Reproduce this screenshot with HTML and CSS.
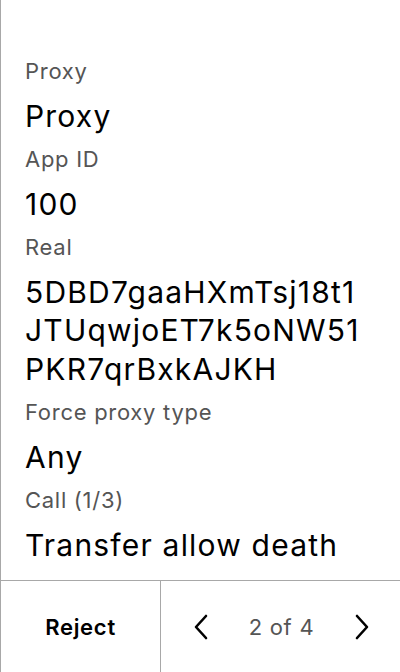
FILE: index.html
```html
<!DOCTYPE html>
<html>
<head>
<meta charset="utf-8">
<link rel="stylesheet" href="styles.css">
</head>
<body>
<div class="screen">
  <div class="content">
    <div class="field">
      <div class="label">Proxy</div>
      <div class="value">Proxy</div>
    </div>
    <div class="field">
      <div class="label">App ID</div>
      <div class="value">100</div>
    </div>
    <div class="field">
      <div class="label">Real</div>
      <div class="value">5DBD7gaaHXmTsj18t1JTUqwjoET7k5oNW51PKR7qrBxkAJKH</div>
    </div>
    <div class="field">
      <div class="label">Force proxy type</div>
      <div class="value">Any</div>
    </div>
    <div class="field">
      <div class="label">Call (1/3)</div>
      <div class="value">Transfer allow death</div>
    </div>
  </div>
  <div class="footer">
    <div class="reject">Reject</div>
    <div class="pager">
      <svg class="chev" width="20" height="28" viewBox="0 0 20 28"><path d="M15 3 L5 14 L15 25" fill="none" stroke="#000" stroke-width="2.6" stroke-linecap="round" stroke-linejoin="round"/></svg>
      <span class="count">2 of 4</span>
      <svg class="chev" width="20" height="28" viewBox="0 0 20 28"><path d="M5 3 L15 14 L5 25" fill="none" stroke="#000" stroke-width="2.6" stroke-linecap="round" stroke-linejoin="round"/></svg>
    </div>
  </div>
</div>
</body>
</html>
```
FILE: styles.css
```css
html, body {
  margin: 0;
  padding: 0;
  background: #fff;
}
body {
  font-family: Inter, "Noto Sans", sans-serif;
  letter-spacing: 0.045em;
}
.screen {
  width: 399px;
  height: 672px;
  border-left: 1px solid #a8a8a8;
  display: flex;
  flex-direction: column;
}
.content {
  flex: 1;
  padding: 57px 37px 0 24px;
  width: 338px;
  display: flex;
  flex-direction: column;
  gap: 10px;
}
.label {
  font-size: 22px;
  line-height: 28px;
  color: #555;
  margin-bottom: 11.5px;
}
.value {
  font-size: 30px;
  line-height: 38.5px;
  letter-spacing: 0.04em;
  color: #000;
  word-break: break-all;
}
.footer {
  height: 91px;
  border-top: 1px solid #a8a8a8;
  display: flex;
}
.reject {
  width: 159px;
  border-right: 1px solid #a8a8a8;
  display: flex;
  align-items: center;
  justify-content: center;
  font-size: 22px;
  font-weight: 600;
  color: #000;
}
.pager {
  flex: 1;
  display: flex;
  align-items: center;
  justify-content: space-between;
  padding: 0 28px 0 30px;
}
.count {
  font-size: 22px;
  color: #555;
}
```
